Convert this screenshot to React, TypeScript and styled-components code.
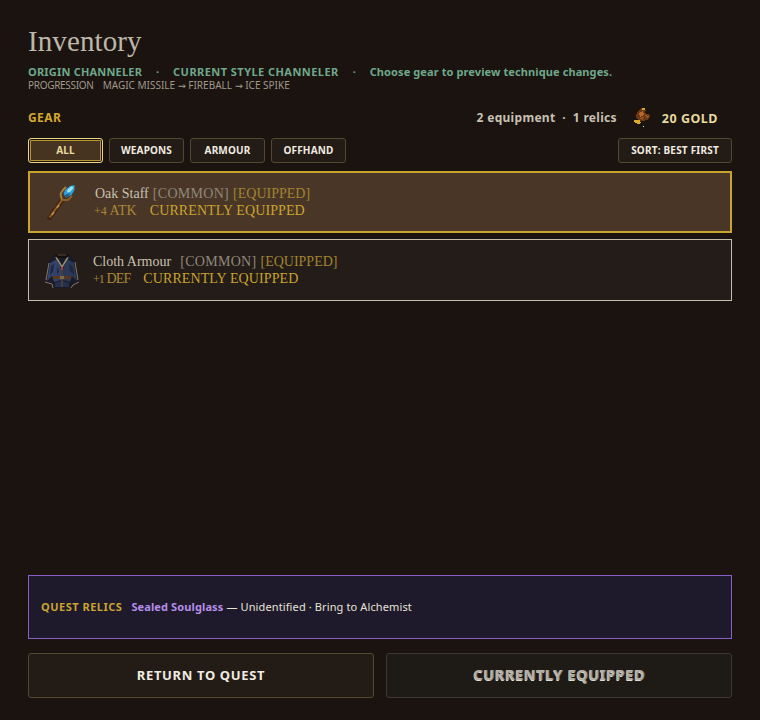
import styled, { createGlobalStyle } from "styled-components";

const GlobalStyle = createGlobalStyle`
  html, body {
    margin: 0;
    padding: 0;
    background: #1a1310;
  }
  * {
    box-sizing: border-box;
  }
`;

const uiFont = `"Noto Sans", "Open Sans", sans-serif`;
const bookFont = `"Liberation Serif", serif`;

const Page = styled.div`
  width: 760px;
  height: 720px;
  padding: 22px 28px;
  display: flex;
  flex-direction: column;
  font-family: ${uiFont};
  overflow: hidden;
`;

const Title = styled.h1`
  margin: 0;
  font: 400 29px/38px ${bookFont};
  letter-spacing: 0.1px;
  color: #bdb7a9;
`;

const SummaryRow = styled.div`
  margin-top: 5px;
  display: flex;
  font-size: 11px;
  line-height: 14px;
  font-weight: 700;
  color: #6fa88a;
`;

const SummaryText = styled.span<{ $spacing: number }>`
  letter-spacing: ${({ $spacing }) => $spacing}px;
`;

const SummaryDot = styled.span`
  width: 31px;
  text-align: center;
`;

const ProgressRow = styled.div`
  display: flex;
  gap: 9px;
  font-size: 10px;
  line-height: 13px;
  color: #a0988a;
`;

const ProgressLabel = styled.span`
  letter-spacing: -0.3px;
`;

const Arrow = styled.span`
  font-family: "DejaVu Sans", sans-serif;
  font-size: 9.5px;
`;

const GearHeader = styled.div`
  margin-top: 13px;
  height: 24px;
  display: flex;
  align-items: center;
  justify-content: space-between;
`;

const GearLabel = styled.div`
  font-size: 12px;
  font-weight: 700;
  letter-spacing: 0.4px;
  color: #d2a72c;
`;

const GearStats = styled.div`
  display: flex;
  align-items: center;
  padding-right: 14px;
  font-size: 12px;
  font-weight: 700;
  letter-spacing: 0.3px;
  color: #c8c1b2;
`;

const Gold = styled.span`
  display: flex;
  align-items: center;
  gap: 11px;
  margin-left: 16px;
  color: #e8d9a0;
  font-size: 12.5px;
  letter-spacing: 0.5px;
`;

const GoldText = styled.span`
  padding-top: 3px;
`;

const FilterRow = styled.div`
  margin-top: 9px;
  display: flex;
  gap: 6px;
`;

const FilterButton = styled.button<{ $active?: boolean }>`
  width: 75px;
  height: 25px;
  padding: 0 0 2px;
  border-radius: 3px;
  font: 700 10px ${uiFont};
  letter-spacing: 0.15px;
  color: ${({ $active }) => ($active ? "#e8d9a0" : "#f0ebe0")};
  background: ${({ $active }) => ($active ? "#463320" : "#231b16")};
  border: 1px solid ${({ $active }) => ($active ? "#e8d48a" : "#564733")};
  box-shadow: ${({ $active }) =>
    $active ? "inset 0 0 0 1px #1a1310, inset 0 0 0 2px #b8952f" : "none"};
`;

const SortButton = styled(FilterButton)`
  width: 114px;
  margin-left: auto;
  letter-spacing: 0.2px;
`;

const ItemList = styled.div`
  margin-top: 8px;
  flex: 1;
  display: flex;
  flex-direction: column;
  gap: 6px;
`;

const ItemRow = styled.div<{ $selected?: boolean }>`
  height: 62px;
  display: flex;
  align-items: center;
  gap: 11px;
  padding-left: ${({ $selected }) => ($selected ? "14px" : "13px")};
  background: ${({ $selected }) => ($selected ? "#4a3626" : "#241c18")};
  border: ${({ $selected }) =>
    $selected ? "2px solid #c9a42f" : "1px solid #c4bdad"};
`;

const ItemIcon = styled.svg`
  flex: none;
  width: 40px;
  height: 40px;
`;

const ItemText = styled.div`
  font-family: ${bookFont};
  font-size: 14px;
  line-height: 17px;
`;

const ItemName = styled.span<{ $gap?: number }>`
  color: #c8c1b2;
  margin-right: ${({ $gap }) => $gap ?? 4}px;
`;

const Rarity = styled.span`
  color: #8f887b;
  letter-spacing: 0.3px;
`;

const EquippedTag = styled.span`
  color: #a08432;
  margin-left: 4px;
`;

const StatText = styled.span<{ $spacing?: number; $shift?: number }>`
  color: #a8893a;
  margin-right: 13px;
  margin-left: ${({ $shift }) => $shift ?? 0}px;
  letter-spacing: ${({ $spacing }) => $spacing ?? 0}px;
`;

const StatAmount = styled.span`
  font-size: 12px;
`;

const StatusText = styled.span`
  color: #c9a42f;
  letter-spacing: 0.1px;
`;

const RelicBox = styled.div`
  height: 64px;
  padding: 0 12px 2px;
  display: flex;
  align-items: center;
  gap: 9px;
  font-size: 11px;
  letter-spacing: 0.12px;
  color: #e8e3d8;
  background: #1e1a2c;
  border: 1px solid #8a5fc4;
`;

const RelicLabel = styled.span`
  font-weight: 700;
  letter-spacing: 0.5px;
  color: #c9a42f;
`;

const RelicName = styled.span`
  font-weight: 700;
  color: #b48ee8;
`;

const ActionRow = styled.div`
  margin-top: 14px;
  display: grid;
  grid-template-columns: 1fr 1fr;
  gap: 12px;
`;

const ActionButton = styled.button<{ $disabled?: boolean }>`
  height: 45px;
  padding: 0 0 ${({ $disabled }) => ($disabled ? "4px" : "2px")};
  border-radius: 3px;
  font: 700 ${({ $disabled }) => ($disabled ? "14.5px" : "13px")} ${uiFont};
  letter-spacing: ${({ $disabled }) => ($disabled ? "0.6px" : "0.65px")};
  color: ${({ $disabled }) => ($disabled ? "#b5b1a8" : "#f0ebe0")};
  background: ${({ $disabled }) => ($disabled ? "#1e1a16" : "#231b16")};
  border: 1px solid ${({ $disabled }) => ($disabled ? "#3d3830" : "#564733")};
  text-shadow: ${({ $disabled }) =>
    $disabled ? "1px 0 0 #77736b, 0 1px 0 #e0dcd2" : "none"};
`;

const StaffIcon = () => (
  <ItemIcon viewBox="0 0 40 40">
    <path d="M3 36 L8 28 L17 16 L21 18 L12 31 L7 38 L4 38 Z" fill="#3f2511" />
    <path d="M5.5 35.5 L18.5 17.5" stroke="#8f5c2c" strokeWidth="2" />
    <path d="M8 33 L10 30 M13 26 L15 23" stroke="#c08a4a" strokeWidth="1.5" />
    <path d="M18 18 L16.5 12 L19 8 L22 5" stroke="#a87c3a" strokeWidth="2" fill="none" />
    <path d="M18 18 L24 18 L28 14" stroke="#8a5f2a" strokeWidth="2" fill="none" />
    <path d="M21 8 L26 4 L30.5 3 L30.5 8 L27.5 13 L22 15.5 L19.5 12 Z" fill="#2f9fd8" />
    <path d="M23.5 7.5 L28 4 L29.5 6 L26 10 L23 10.5 Z" fill="#9ce4f4" />
    <path d="M21 13 L26 11 L25 14 L22 15.5 Z" fill="#1c648f" />
  </ItemIcon>
);

const ArmourIcon = () => (
  <ItemIcon viewBox="0 0 40 40">
    <path d="M12 5 L28 4 L33 11 L37 32 L31 35 L29 38 L11 38 L10 34 L3 32 L7 12 Z" fill="#191b28" />
    <path d="M8 13 L15 9 L19 19 L19 30 L12 32 L10 26 L5 31 Z" fill="#33426a" />
    <path d="M32 13 L25 9 L21 19 L21 30 L28 32 L30 26 L35 31 Z" fill="#2c3858" />
    <path d="M9 16 L12 14 L11 22 L8 25 Z M15 16 L17 21 L15 25 Z M27 14 L31 17 L32 25 L28 21 Z" fill="#1f2740" />
    <path d="M13 33 L19 31 L19 37 L13 37 Z M21 31 L27 33 L27 37 L21 37 Z" fill="#262f4c" />
    <path d="M14 7 L20 17 L26 7" stroke="#9a8a6c" strokeWidth="1.5" fill="none" />
    <path d="M13 4 L27 4 L25 8 L15 8 Z" fill="#14100e" />
    <path d="M15 4 L25 4 L24 6 L16 6 Z" fill="#3a2c22" />
    <path d="M11 26 L29 26 L29 29 L11 29 Z" fill="#5a3820" />
    <path d="M18 26 L22 26 L22 29 L18 29 Z" fill="#8a6a40" />
    <path d="M19 17 L21 17 L21 20 L19 20 Z" fill="#a83a2a" />
    <path d="M20 20 L20 37" stroke="#6f6350" strokeWidth="1" />
    <path d="M3 32 L10 34 L11 38 M37 32 L31 35 L29 38 M7 13 L4 30 M33 12 L36 30" stroke="#857862" strokeWidth="1" fill="none" />
  </ItemIcon>
);

const GoldIcon = () => (
  <svg width="18" height="20" viewBox="0 0 18 20" shapeRendering="crispEdges">
    <path d="M4 5 L9 1 L13 3 L12 6 L17 8 L16 12 L11 14 L6 14 L3 10 Z" fill="#6a3815" />
    <path d="M6 6 L10 4 L11 8 L7 10 Z" fill="#b8682a" />
    <path d="M12 8 L16 9 L14 11 Z" fill="#a05a24" />
    <path d="M8 10 L11 10 L10 13 L7 12 Z" fill="#93521f" />
    <path d="M9 1 L12 1 L12 3 L9 3 Z" fill="#d8a030" />
    <path d="M1 13 L7 13 L8 16 L5 17 L2 16 Z" fill="#e0a828" />
    <path d="M10 19 L11 19 L11 20 L10 20 Z" fill="#f0ebe0" />
  </svg>
);

const App = () => {
  return (
    <Page>
      <GlobalStyle />
      <Title>Inventory</Title>
      <SummaryRow>
        <SummaryText $spacing={0.2}>ORIGIN CHANNELER</SummaryText>
        <SummaryDot>·</SummaryDot>
        <SummaryText $spacing={0.45}>CURRENT STYLE CHANNELER</SummaryText>
        <SummaryDot>·</SummaryDot>
        <SummaryText $spacing={0.1}>Choose gear to preview technique changes.</SummaryText>
      </SummaryRow>
      <ProgressRow>
        <ProgressLabel>PROGRESSION</ProgressLabel>
        <span>
          MAGIC MISSILE <Arrow>→</Arrow> FIREBALL <Arrow>→</Arrow> ICE SPIKE
        </span>
      </ProgressRow>
      <GearHeader>
        <GearLabel>GEAR</GearLabel>
        <GearStats>
          2 equipment &nbsp;·&nbsp; 1 relics
          <Gold>
            <GoldIcon />
            <GoldText>20 GOLD</GoldText>
          </Gold>
        </GearStats>
      </GearHeader>
      <FilterRow>
        <FilterButton $active>ALL</FilterButton>
        <FilterButton>WEAPONS</FilterButton>
        <FilterButton>ARMOUR</FilterButton>
        <FilterButton>OFFHAND</FilterButton>
        <SortButton>SORT: BEST FIRST</SortButton>
      </FilterRow>
      <ItemList>
        <ItemRow $selected>
          <StaffIcon />
          <ItemText>
            <ItemName>Oak Staff</ItemName>
            <Rarity>[COMMON]</Rarity>
            <EquippedTag>[EQUIPPED]</EquippedTag>
            <br />
            <StatText $shift={-1}>
              <StatAmount>+4</StatAmount> ATK
            </StatText>
            <StatusText>CURRENTLY EQUIPPED</StatusText>
          </ItemText>
        </ItemRow>
        <ItemRow>
          <ArmourIcon />
          <ItemText>
            <ItemName $gap={9}>Cloth Armour</ItemName>
            <Rarity>[COMMON]</Rarity>
            <EquippedTag>[EQUIPPED]</EquippedTag>
            <br />
            <StatText $spacing={-0.9}>
              <StatAmount>+1</StatAmount> DEF
            </StatText>
            <StatusText>CURRENTLY EQUIPPED</StatusText>
          </ItemText>
        </ItemRow>
      </ItemList>
      <RelicBox>
        <RelicLabel>QUEST RELICS</RelicLabel>
        <span>
          <RelicName>Sealed Soulglass</RelicName> — Unidentified · Bring to Alchemist
        </span>
      </RelicBox>
      <ActionRow>
        <ActionButton>RETURN TO QUEST</ActionButton>
        <ActionButton $disabled>CURRENTLY EQUIPPED</ActionButton>
      </ActionRow>
    </Page>
  );
};

export default App;
